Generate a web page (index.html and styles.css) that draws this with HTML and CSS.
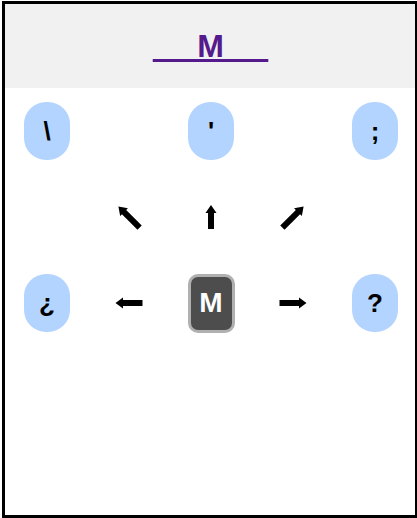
FILE: index.html
```html
<!DOCTYPE html>
<html lang="en">
<head>
    <meta charset="UTF-8">
    <meta name="viewport" content="width=device-width, initial-scale=1.0">
    <title>Key</title>
    <link rel="stylesheet" href="styles.css">
</head>
<body>
    <div class="frame">
        <div class="header">
            <h1><a class="title-link" href="#">&nbsp;&nbsp;&nbsp;&nbsp;&nbsp;M&nbsp;&nbsp;&nbsp;&nbsp;&nbsp;</a></h1>
        </div>

        <div class="pad">
            <!-- row 1 -->
            <div class="cell"><span class="key">\</span></div>
            <div class="cell"></div>
            <div class="cell"><span class="key">'</span></div>
            <div class="cell"></div>
            <div class="cell"><span class="key">;</span></div>

            <!-- row 2 -->
            <div class="cell"></div>
            <div class="cell">
                <svg class="arrow" width="32" height="32" viewBox="0 0 32 32"><polygon transform="rotate(-45 16 16)" points="16,1 21.5,9 19,9 19,31 13,31 13,9 10.5,9"/></svg>
            </div>
            <div class="cell">
                <svg class="arrow" width="32" height="32" viewBox="0 0 32 32"><polygon points="16,4 21.5,12 19,12 19,28 13,28 13,12 10.5,12"/></svg>
            </div>
            <div class="cell">
                <svg class="arrow" width="32" height="32" viewBox="0 0 32 32"><polygon transform="rotate(45 16 16)" points="16,1 21.5,9 19,9 19,31 13,31 13,9 10.5,9"/></svg>
            </div>
            <div class="cell"></div>

            <!-- row 3 -->
            <div class="cell"><span class="key">¿</span></div>
            <div class="cell">
                <svg class="arrow" width="32" height="32" viewBox="0 0 32 32"><polygon transform="rotate(-90 16 16)" points="16,2.5 21.5,10 19,10 19,29.5 13,29.5 13,10 10.5,10"/></svg>
            </div>
            <div class="cell"><span class="key key-main">M</span></div>
            <div class="cell">
                <svg class="arrow" width="32" height="32" viewBox="0 0 32 32"><polygon transform="rotate(90 16 16)" points="16,2.5 21.5,10 19,10 19,29.5 13,29.5 13,10 10.5,10"/></svg>
            </div>
            <div class="cell"><span class="key">?</span></div>
        </div>
    </div>
</body>
</html>
```

FILE: styles.css
```css
html, body {
    margin: 0;
    overflow: hidden;
}
body {
    font-family: "Liberation Sans", Arial, sans-serif;
    background: #fff;
}
.frame {
    margin: 1px 0 0 2px;
    width: 416px;
    height: 517px;
    border: 3px solid #000;
    box-sizing: border-box;
    background: #fff;
}
.header {
    background-color: #f1f1f1;
    padding: 24px 0 23px 1px;
    text-align: center;
}
.header h1 {
    margin: 0;
    font-size: 32px;
    font-weight: bold;
}
.title-link {
    color: #551a8b;
}
.pad {
    display: grid;
    grid-template-columns: repeat(5, 82px);
    grid-auto-rows: 86px;
    padding-left: 1px;
}
.cell {
    display: flex;
    justify-content: center;
    align-items: center;
}
.key {
    width: 46px;
    height: 58px;
    border-radius: 22px;
    background-color: #b3d4fe;
    display: flex;
    justify-content: center;
    align-items: center;
    font-size: 26px;
    font-weight: bold;
    color: #000;
}
.key-main {
    width: 41px;
    height: 53px;
    border: 3px solid #b0b0b0;
    border-radius: 10px;
    background-color: #4d4d4d;
    color: #fff;
    font-size: 28px;
}
.arrow {
    display: block;
    fill: #000;
}
```
